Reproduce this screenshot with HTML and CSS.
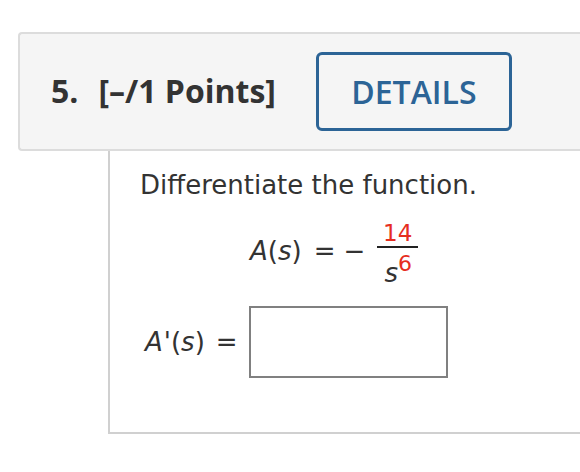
FILE: index.html
```html
<!DOCTYPE html>
<html>
<head>
<meta charset="utf-8">
<link rel="stylesheet" href="styles.css">
</head>
<body>
<div class="page">
  <div class="qhead">
    <span class="qnum">5.</span>
    <span class="qpts">[–/1 Points]</span>
    <button class="details">DETAILS</button>
  </div>
  <div class="qbody">
    <p class="prompt">Differentiate the function.</p>
    <div class="mrow">
      <span class="mtxt"><i>A</i>(<i>s</i>)</span>
      <span class="mtxt op1">=</span>
      <span class="mtxt op2">−</span>
      <span class="frac">
        <span class="num">14</span>
        <span class="bar"></span>
        <span class="den"><i>s</i><sup class="sup">6</sup></span>
      </span>
    </div>
    <div class="arow">
      <span class="mtxt"><i>A<span class="prime">'</span></i>(<i>s</i>)</span>
      <span class="mtxt op3">=</span>
      <span class="answer"></span>
    </div>
  </div>
</div>
</body>
</html>
```
FILE: styles.css
```css
html { overflow: hidden; }
body {
  margin: 0;
  background: #fff;
  font-family: "DejaVu Sans", Verdana, sans-serif;
  color: #333;
}
.page {
  padding-top: 32px;
}
.qhead {
  margin-left: 18px;
  height: 115px;
  background: #f5f5f5;
  border: 2px solid #dcdcdc;
  border-right: none;
  border-radius: 4px 0 0 4px;
  display: flex;
  align-items: center;
  padding-left: 31px;
  font-family: "Open Sans", sans-serif;
}
.qnum, .qpts {
  font-size: 32px;
  font-weight: 700;
  color: #333;
  margin-top: -3px;
}
.qpts { margin-left: 20px; }
.details {
  margin-left: 40px;
  box-sizing: border-box;
  width: 196px;
  height: 79px;
  background: transparent;
  border: 3px solid #2c6496;
  border-radius: 6px;
  color: #2c6496;
  font-family: "Open Sans", sans-serif;
  font-size: 32px;
  font-weight: 600;
  padding: 0;
  display: flex;
  align-items: center;
  justify-content: center;
}
.qbody {
  margin-left: 108px;
  border-left: 2px solid #d0d0d0;
  border-bottom: 2px solid #d0d0d0;
  padding-left: 30px;
  box-sizing: border-box;
  height: 283px;
  padding-top: 19px;
}
.prompt {
  margin: 0;
  font-size: 26px;
  line-height: 30px;
}
.mrow {
  display: flex;
  align-items: flex-start;
  margin-top: 23px;
  padding-left: 110px;
}
.mtxt {
  font-size: 26px;
  line-height: 30px;
  margin-top: 13px;
}
.mtxt i { font-style: italic; }
.prime { margin-left: 1px; }
.op1 { margin-left: 12px; }
.op2 { margin-left: 8px; }
.frac {
  margin-left: 12px;
  display: flex;
  flex-direction: column;
  align-items: center;
  width: 41px;
}
.num {
  color: #e62e1f;
  font-size: 23px;
  line-height: 20px;
}
.bar {
  width: 41px;
  height: 2px;
  background: #222;
  margin-top: 3px;
}
.den {
  font-size: 26px;
  line-height: 26px;
  margin-top: 12px;
  padding-left: 1px;
}
.sup {
  color: #e62e1f;
  font-size: 22px;
  line-height: 0;
  vertical-align: 11px;
}
.arow {
  display: flex;
  align-items: center;
  margin-top: 20px;
  padding-left: 5px;
}
.arow .mtxt { margin-top: 0; }
.op3 { margin-left: 11px; }
.answer {
  margin-left: 11px;
  box-sizing: border-box;
  width: 199px;
  height: 72px;
  border: 2px solid #808080;
  background: #fff;
}
```
